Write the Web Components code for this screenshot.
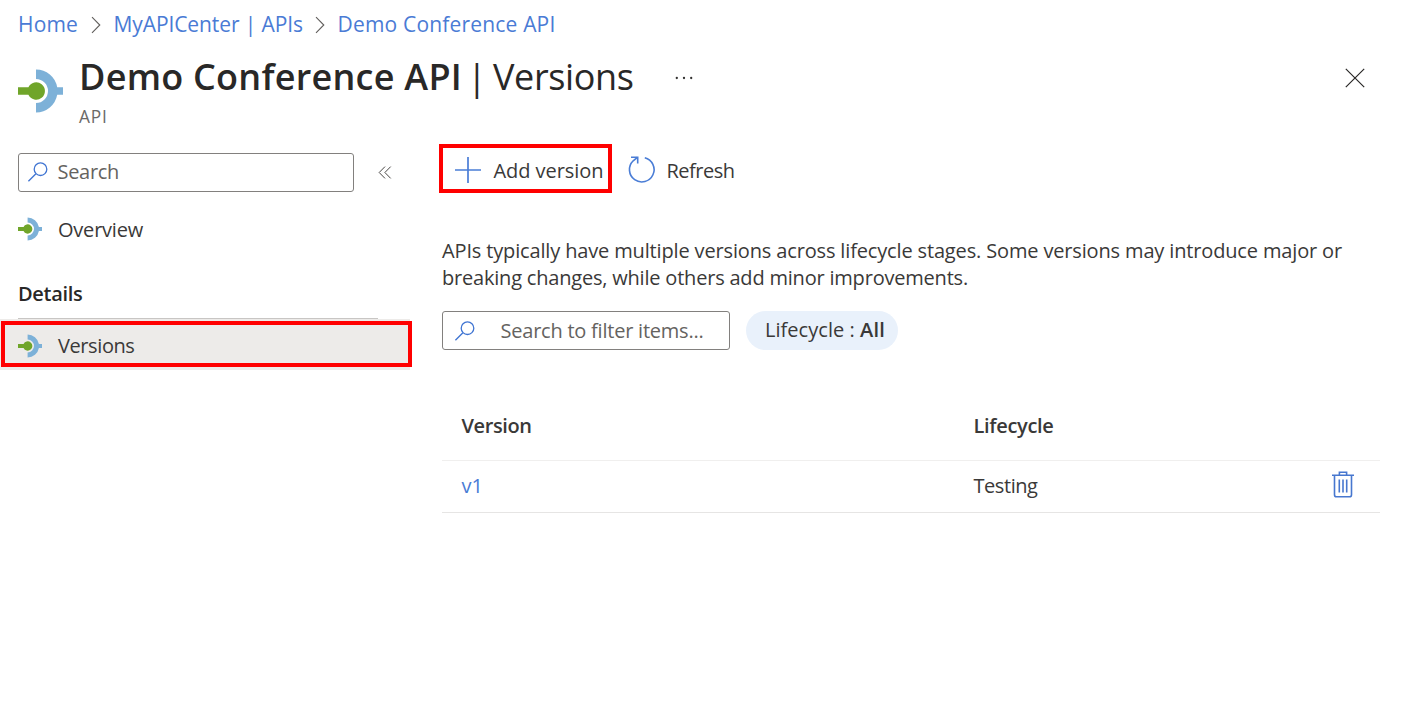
<!DOCTYPE html>
<html lang="en">
<head>
<meta charset="utf-8">
<title>Demo Conference API | Versions</title>
<style>
html,body{margin:0;height:100%;background:#fff;overflow:hidden}
body{font-family:"Open Sans","Noto Sans",sans-serif;font-size:20px;color:#3a3938}
</style>
</head>
<body>
<api-page></api-page>
<script>
const define = (name, html, setup) => customElements.define(name, class extends HTMLElement {
  connectedCallback() {
    if (this.shadowRoot) return;
    const t = document.createElement('template');
    t.innerHTML = html;
    this.attachShadow({mode: 'open'}).append(t.content.cloneNode(true));
    if (setup) setup.call(this, this.shadowRoot);
  }
});

/* Text run whose tracking is adjusted to an intended measure (attribute w). */
define('ui-text', `<style>:host{display:block;white-space:pre;flex:none}span{display:inline-block}</style><span><slot></slot></span>`, function (root) {
  const w = +this.getAttribute('w');
  if (!w) return;
  const s = root.querySelector('span');
  const n = this.textContent.length;
  s.style.letterSpacing = (w - s.getBoundingClientRect().width) / n + 'px';
  this.style.width = w + 'px';
});

const icons = {
  api: ['0 0 45 44', '<path fill="#7db1d8" d="M18 .5A21.5 21.5 0 0 1 39.2 18.2H45V25.8H39.2A21.5 21.5 0 0 1 18 43.5V34A12 12 0 0 0 18 10Z"/><path fill="#70a52a" d="M0 18.2H10.4A8.7 8.7 0 1 1 10.4 25.8H0Z"/>'],
  search: ['0 0 20 20', '<g fill="none" stroke="#3f74d2" stroke-width="1.3"><circle cx="12.5" cy="7.2" r="6.3"/><path d="M7.9 11.8.4 19.3"/></g>'],
  chevron: ['0 0 10 18', '<path fill="none" stroke="#605e5c" stroke-width="1.1" d="M1 1.2 8.8 9 1 16.8"/>'],
  collapse: ['0 0 14 13', '<path fill="none" stroke="#494745" stroke-width="1" d="M7 .6 1.2 6.5 7 12.4M12.7.6 6.9 6.5 12.7 12.4"/>'],
  close: ['0 0 20 20', '<path stroke="#292827" stroke-width="1.2" d="M.8.8 19.2 19.2M19.2.8.8 19.2"/>'],
  more: ['0 0 18 4', '<g fill="#323130"><circle cx="1.8" cy="2" r="1.15"/><circle cx="9" cy="2" r="1.15"/><circle cx="16.2" cy="2" r="1.15"/></g>'],
  plus: ['0 0 26 26', '<path stroke="#4a7dd6" stroke-width="1.7" d="M13 0V26M0 13H26"/>'],
  refresh: ['0 0 27 27', '<g fill="none" stroke="#4a7dd6" stroke-width="1.6"><path d="M16.8 1.7A12.3 12.3 0 1 1 5.2 4.8L9.4 1.4"/><path d="M3 1.2H9.7V7.6"/></g>'],
  trash: ['0 0 22 27', '<g fill="none" stroke="#4777cf" stroke-width="1.6"><path d="M0 4.3H22M7.4 4V1.2H14.6V4M2.5 4.5V23.7Q2.5 25.8 4.5 25.8H17.5Q19.5 25.8 19.5 23.7V4.5"/><path d="M7.3 8.6V21.6M11 8.6V21.6M14.7 8.6V21.6"/></g>']
};
define('ui-icon', `<style>:host{display:block;flex:none}svg{display:block;width:100%;height:100%;overflow:visible}</style><svg aria-hidden="true"></svg>`, function (root) {
  const [box, art] = icons[this.getAttribute('name')];
  const svg = root.querySelector('svg');
  svg.setAttribute('viewBox', box);
  svg.innerHTML = art;
  this.style.width = this.getAttribute('width') + 'px';
  this.style.height = this.getAttribute('height') + 'px';
});

define('page-header', `<style>
:host{display:block;height:135px}
nav{display:flex;align-items:center;height:48px;padding-left:18px;font-size:21px;color:#4a7bd5}
.c1{margin:2px 13px 0 12.5px}.c2{margin:2px 13px 0 11.5px}
.row{display:flex;padding-left:18px}
.logo{margin:21px 16px 0 0}
.titles{flex:none}
h1{display:flex;margin:0;padding-top:1px;height:56px;line-height:56px;font-size:36px;font-weight:400;color:#292827}
.name{font-weight:600}
.bar{margin:0 6px 0 5px}
.sub{font-size:17.3px;line-height:24px;color:#6b6967}
.more{margin:28px 0 0 41px}
.close{margin:20px 38.5px 0 auto}
</style>
<nav><ui-text w="60">Home</ui-text><ui-icon class="c1" name="chevron" width="10" height="18"></ui-icon><ui-text w="189.5">MyAPICenter | APIs</ui-text><ui-icon class="c2" name="chevron" width="10" height="18"></ui-icon><ui-text w="218">Demo Conference API</ui-text></nav>
<div class="row"><ui-icon class="logo" name="api" width="45" height="44"></ui-icon>
<div class="titles"><h1><ui-text class="name" w="383">Demo Conference API</ui-text><ui-text class="bar" w="20">|</ui-text><ui-text w="140.5">Versions</ui-text></h1><ui-text class="sub" w="28.5">API</ui-text></div>
<ui-icon class="more" name="more" width="18" height="4"></ui-icon>
<ui-icon class="close" name="close" width="20" height="20"></ui-icon></div>`);

define('nav-item', `<style>
:host{display:flex;align-items:center;box-sizing:border-box;height:51px;width:410px;padding-left:18px;position:relative}
:host([selected]){background:#edebe9;padding-top:2px}
ui-icon{margin:-1px 16px 0 0}
:host([selected]) ui-icon{margin-top:1px}
.mark{display:none;position:absolute;left:1px;top:2px;width:403px;height:38px;border:4px solid #f00}
:host([selected]) .mark{display:block}
</style><ui-icon name="api" width="24" height="24"></ui-icon><slot></slot><div class="mark"></div>`);

define('search-box', `<style>
:host{display:flex;align-items:center;box-sizing:border-box;height:39px;border:1px solid #82807e;border-radius:3px;color:#65635f;font-size:20px}
</style><ui-icon name="search" width="20" height="20"></ui-icon><slot></slot>`);

define('side-menu', `<style>
:host{display:block;width:412px;flex:none;padding-top:18px}
.find{display:flex;align-items:center}
search-box{width:336px;height:39px;margin:0 24px 0 18px;padding:0 0 2px 9px;gap:9.5px}
.over{margin-top:12px}
h2{margin:26px 0 0 18px;width:360px;height:38px;line-height:26px;font-size:20px;font-weight:600;color:#292827;border-bottom:1px solid #c8c6c4;box-sizing:border-box}
</style>
<div class="find"><search-box><ui-text w="61.5">Search</ui-text></search-box><ui-icon name="collapse" width="14" height="13"></ui-icon></div>
<nav-item class="over"><ui-text w="85">Overview</ui-text></nav-item>
<h2><ui-text w="64.5">Details</ui-text></h2>
<nav-item selected><ui-text w="76.5">Versions</ui-text></nav-item>`);

define('command-bar', `<style>
:host{display:flex;align-items:center;height:49px;margin-left:-3px}
.add{display:flex;align-items:center;box-sizing:border-box;width:173px;height:49px;border:4px solid #f00;padding:2px 0 0 12px;gap:12.5px}
.ref{display:flex;align-items:center;margin-left:15.5px;padding-top:2px;gap:12px}
ui-text{padding-top:1px}
</style>
<div class="add"><ui-icon name="plus" width="26" height="26"></ui-icon><ui-text w="110">Add version</ui-text></div>
<div class="ref"><ui-icon name="refresh" width="27" height="27"></ui-icon><ui-text w="68">Refresh</ui-text></div>`);

define('version-table', `<style>
:host{display:block;width:938px}
.r{display:grid;grid-template-columns:512px 358px 1fr;align-items:center;box-sizing:border-box;padding-left:19.5px;border-bottom:1px solid #e6e5e4}
.head{height:71px;font-weight:600;border-color:#f0efee}
.item{height:52px;padding-bottom:2px}.link{color:#4a7bd5}
ui-icon{margin:-3px 0 0}
</style>
<div class="r head"><ui-text w="70">Version</ui-text><ui-text w="80">Lifecycle</ui-text></div>
<div class="r item"><ui-text class="link" w="21.5">v1</ui-text><ui-text w="64">Testing</ui-text><ui-icon name="trash" width="22" height="27"></ui-icon></div>`);

define('version-panel', `<style>
:host{display:block;flex:1;padding:9px 0 0 30px}
.about{margin-top:44px;line-height:27px}
.filters{display:flex;margin:20px 0 40px;gap:16px}
search-box{width:288px;padding-left:12px;gap:25.5px}
.pill{display:flex;align-items:center;box-sizing:border-box;width:152px;height:39px;padding:0 0 2px 19px;border-radius:20px;background:#e9f1fb}
b{font-weight:600}
</style>
<command-bar></command-bar>
<div class="about"><ui-text w="900">APIs typically have multiple versions across lifecycle stages. Some versions may introduce major or</ui-text><ui-text w="526">breaking changes, while others add minor improvements.</ui-text></div>
<div class="filters"><search-box><ui-text w="203">Search to filter items...</ui-text></search-box><div class="pill"><ui-text w="95">Lifecycle : </ui-text><b><ui-text w="25">All</ui-text></b></div></div>
<version-table></version-table>`);

define('api-page', `<style>:host{display:block}main{display:flex}</style><page-header></page-header><main><side-menu></side-menu><version-panel></version-panel></main>`);
</script>
</body>
</html>
